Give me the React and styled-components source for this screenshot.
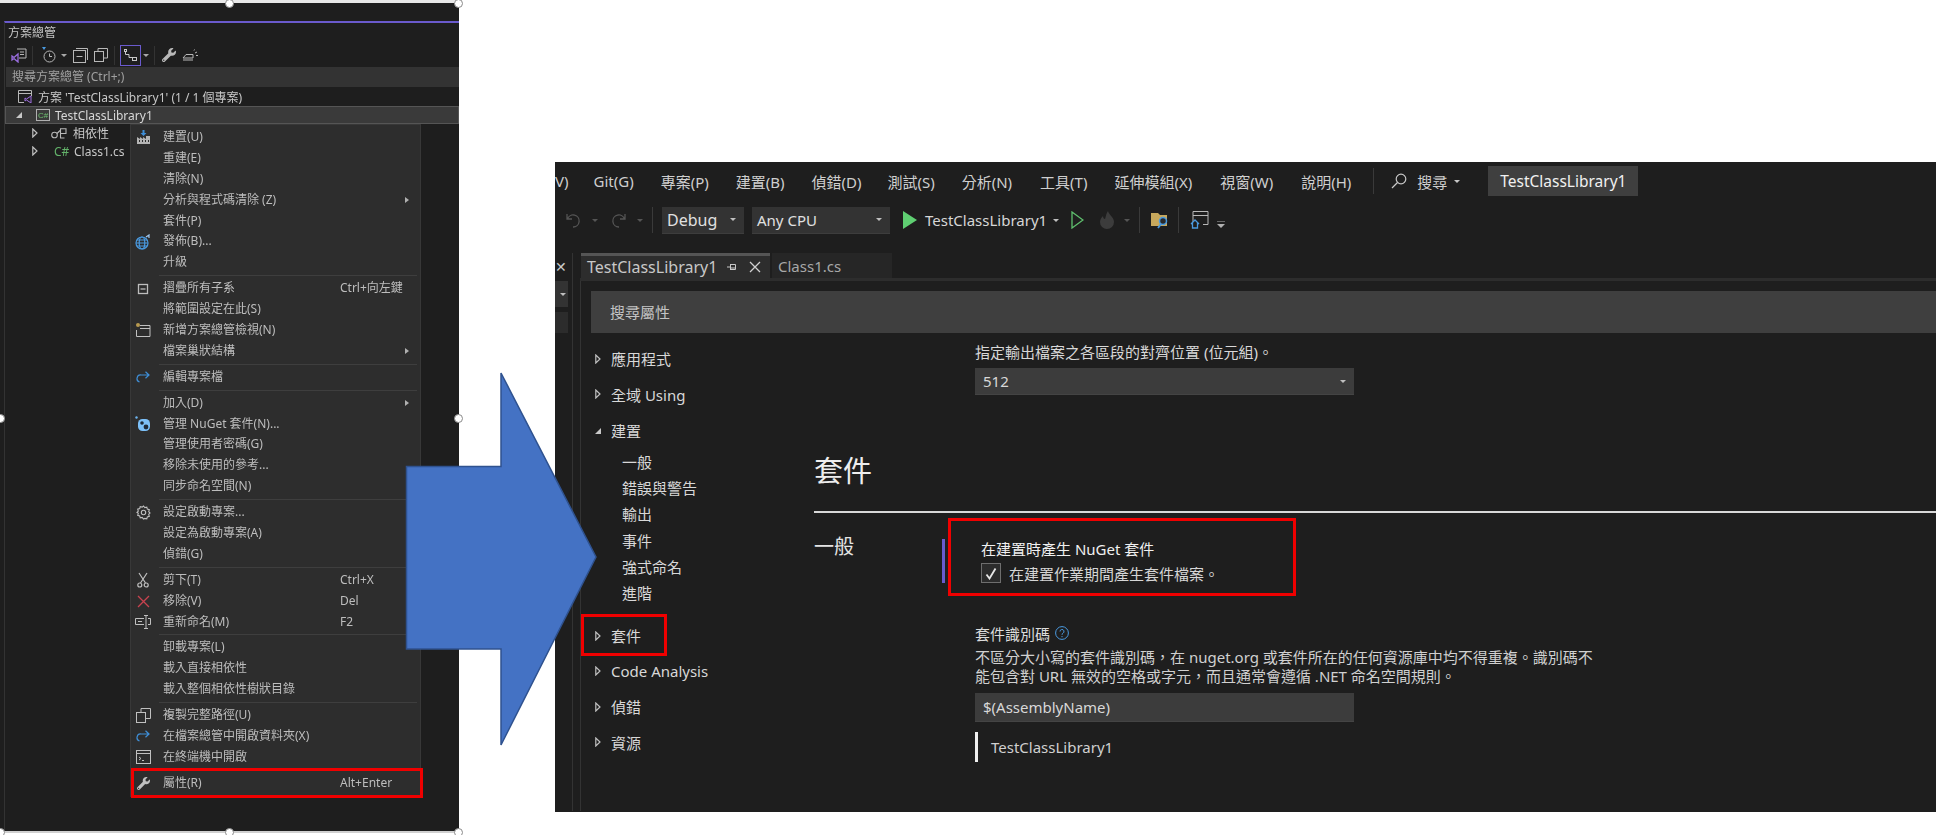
import React from "react";
import styled, { createGlobalStyle } from "styled-components";
import { FaWrench } from "react-icons/fa";

const FONT = '"Noto Sans", "Noto Sans CJK TC", sans-serif';
const SOFT = "filter: blur(0.35px);";

const GlobalStyle = createGlobalStyle`
  html, body { margin: 0; padding: 0; background: #fff; }
  body { font-family: ${FONT}; overflow: hidden; }
  * { box-sizing: border-box; }
`;

const Page = styled.div`
  position: relative;
  width: 1936px;
  height: 835px;
  display: flex;
  align-items: flex-start;
  background: #fff;
  overflow: hidden;
`;

/* ---------- left picture: solution explorer ---------- */

const Explorer = styled.div`
  position: relative;
  width: 459px;
  height: 833px;
  flex: none;
  background: #1e1e1e;
  border-top: 3px solid #e8e8e8;
  border-bottom: 2px solid #d0d0d0;
  padding: 18px 0 0 4px;
  color: #c8c8c8;
  font-size: 12px;
`;

const Handle = styled.span`
  position: absolute;
  z-index: 3;
  left: ${(p) => p.$x}px;
  top: ${(p) => p.$y}px;
  width: 9px;
  height: 9px;
  margin: -4px 0 0 -4px;
  border-radius: 50%;
  background: #fff;
  border: 1px solid #8a8a8a;
`;

const ExplorerInner = styled.div`
  height: 100%;
  border-left: 1px solid #333;
  border-top: 2px solid #6a5acd;
  ${SOFT}
`;

const TitleRow = styled.div`
  display: flex;
  align-items: center;
  height: 17px;
  padding-left: 3px;
  margin-top: 1px;
  gap: 8px;
  line-height: 17px;
  font-size: 12px;
  color: #c4c4c4;
`;

const Grip = styled.div`
  flex: 1;
  height: 5px;
  background-image: radial-gradient(#4a4a4a 0.6px, transparent 0.7px);
  background-size: 2px 2px;
`;

const MiniBar = styled.div`
  display: flex;
  align-items: center;
  height: 24px;
  margin-top: 2px;
  padding-left: 6px;
`;

const MiniItem = styled.span`
  display: flex;
  align-items: center;
  justify-content: center;
  flex: none;
  margin-left: ${(p) => p.$ml || 0}px;
  color: #b8b8b8;
`;

const MiniSep = styled.span`
  flex: none;
  width: 1px;
  height: 19px;
  background: #333;
  margin-left: ${(p) => p.$ml || 0}px;
`;

const ActiveTool = styled.span`
  display: flex;
  align-items: center;
  justify-content: center;
  flex: none;
  width: 21px;
  height: 21px;
  margin-left: ${(p) => p.$ml || 0}px;
  border: 1px solid #6a5acd;
  color: #c8c8c8;
`;

const Caret = styled.span`
  flex: none;
  display: block;
  width: 0;
  height: 0;
  margin-left: ${(p) => p.$ml || 0}px;
  border-left: 3.5px solid transparent;
  border-right: 3.5px solid transparent;
  border-top: 3.5px solid ${(p) => p.$color || "#a8a8a8"};
`;

const TreeSearch = styled.div`
  height: 20px;
  margin: 0 0 0 1px;
  padding-left: 6px;
  background: #333;
  color: #a0a0a0;
  line-height: 20px;
`;

const TreeRow = styled.div`
  display: flex;
  align-items: center;
  height: ${(p) => p.$h || 18}px;
  padding-left: ${(p) => p.$indent}px;
  gap: ${(p) => p.$gap || 5}px;
  white-space: nowrap;
  ${(p) => p.$selected && "background: #3a3a3a; border: 1px solid #555; color: #d8d8d8;"}
`;

const ProjectIcon = styled.svg`
  margin-left: 8px;
`;

const TreeName = styled.span`
  margin-left: ${(p) => p.$ml || 0}px;
`;

const GreenMark = styled.span`
  width: 15px;
  color: #63b36a;
`;

const Menu = styled.div`
  position: absolute;
  z-index: 1;
  left: 130px;
  top: 121px;
  width: 291px;
  padding: 2px 0 2px 0;
  background: #2d2d2d;
  border: 1px solid #383838;
  color: #bdbdbd;
`;

const MenuRow = styled.div`
  position: relative;
  display: flex;
  align-items: center;
  height: 20.9px;
  line-height: 20.9px;
  white-space: nowrap;
`;

const MenuIcon = styled.span`
  display: flex;
  align-items: center;
  justify-content: center;
  flex: none;
  width: 16px;
  height: 16px;
  margin-left: 4px;
  ${SOFT}
`;

const MenuLabel = styled.span`
  margin-left: 12px;
  flex: none;
  width: 177px;
  ${SOFT}
`;

const MenuShortcut = styled.span`
  flex: none;
  ${SOFT}
`;

const SubArrow = styled.span`
  position: absolute;
  right: 11px;
  top: 7px;
  width: 0;
  height: 0;
  border-top: 3.5px solid transparent;
  border-bottom: 3.5px solid transparent;
  border-left: 4px solid #b0b0b0;
`;

const MenuSep = styled.div`
  height: 5px;
  margin-left: 28px;
  margin-right: 3px;
  padding-top: 2px;
  &::after {
    content: "";
    display: block;
    height: 1px;
    background: #3e3e3e;
  }
`;

const RedBox = styled.span`
  position: absolute;
  z-index: 2;
  left: ${(p) => p.$l}px;
  top: ${(p) => p.$t}px;
  width: ${(p) => p.$w}px;
  height: ${(p) => p.$h}px;
  border: 3px solid #f00000;
  pointer-events: none;
`;

/* ---------- right picture: project properties ---------- */

const Studio = styled.div`
  flex: 1;
  height: 650px;
  margin: 162px 0 0 96px;
  background: #1e1e1e;
  color: #d6d6d6;
  overflow: hidden;
  font-size: 15px;
`;

const MenuBar = styled.div`
  display: flex;
  align-items: center;
  height: 38px;
  white-space: nowrap;
  color: #cfcfcf;
`;

const MenuWord = styled.span`
  flex: none;
  margin-left: ${(p) => p.$ml}px;
`;

const BarSep = styled.span`
  flex: none;
  width: 1px;
  height: 26px;
  margin-left: ${(p) => p.$ml}px;
  background: #3a3a3a;
`;

const ProjectChip = styled.span`
  flex: none;
  display: flex;
  align-items: center;
  justify-content: center;
  width: 150px;
  height: 30px;
  margin-left: 28px;
  font-size: 15.5px;
  background: #3f3f3f;
  color: #f0f0f0;
`;

const ToolBar = styled.div`
  display: flex;
  align-items: center;
  height: 36px;
  margin-top: 2px;
  white-space: nowrap;
`;

const ToolItem = styled.span`
  flex: none;
  display: flex;
  align-items: center;
  justify-content: ${(p) => (p.$text ? "flex-start" : "center")};
  margin-left: ${(p) => p.$ml}px;
  ${(p) => p.$w && `width: ${p.$w}px;`}
`;

const Combo = styled.span`
  flex: none;
  display: flex;
  align-items: center;
  justify-content: space-between;
  width: ${(p) => p.$w}px;
  height: 27px;
  margin-left: ${(p) => p.$ml}px;
  padding: 0 8px 0 5px;
  font-size: ${(p) => p.$fs || 15}px;
  background: #333;
  border-bottom: 1px solid #3d3d3d;
  color: #e0e0e0;
`;

const Workspace = styled.div`
  display: flex;
  height: 558px;
  margin-top: 15px;
`;

const SideStub = styled.div`
  flex: none;
  width: 18px;
  border-right: 1px solid #333;
`;

const StubClose = styled.div`
  height: 28px;
  display: flex;
  align-items: center;
  color: #c8c8c8;
  font-size: 14px;
  line-height: 1;
`;

const StubCombo = styled.div`
  width: 13px;
  height: 26px;
  background: #333;
  display: flex;
  align-items: center;
  justify-content: flex-end;
  padding-right: 2px;
`;

const StubPanel = styled.div`
  width: 13px;
  height: 21px;
  margin-top: 5px;
  background: #2c2c2c;
`;

const Main = styled.div`
  flex: 1;
  min-width: 0;
  margin-left: 7px;
  display: flex;
  flex-direction: column;
`;

const TabStrip = styled.div`
  display: flex;
  height: 28px;
  padding-left: 1px;
  border-bottom: 3px solid #2d2d2d;
`;

const Tab = styled.div`
  display: flex;
  align-items: center;
  height: 25px;
  flex: none;
  width: ${(p) => p.$w}px;
  margin-right: ${(p) => (p.$active ? 2 : 0)}px;
  padding-left: 6px;
  background: ${(p) => (p.$active ? "#2d2d2d" : "#262626")};
  border-top: ${(p) => (p.$active ? "3px solid #555" : "0")};
  color: ${(p) => (p.$active ? "#c8c8c8" : "#a8a8a8")};
  white-space: nowrap;
`;

const TabName = styled.span`
  flex: none;
  width: 127px;
  font-size: 16px;
`;

const PinIcon = styled.svg`
  margin-left: 13px;
`;

const CloseIcon = styled.svg`
  margin-left: 12px;
`;

const Body = styled.div`
  flex: 1;
  min-height: 0;
  border-left: 1px solid #333;
  padding: 10px 0 0 10px;
`;

const PropSearch = styled.div`
  height: 42px;
  padding-left: 19px;
  background: #3f3f3f;
  color: #c4c4c4;
  line-height: 42px;
`;

const Columns = styled.div`
  display: flex;
`;

const Nav = styled.div`
  flex: none;
  width: 223px;
  padding-top: 8px;
`;

const NavRow = styled.div`
  position: relative;
  display: flex;
  align-items: center;
  height: 35.5px;
  margin-top: ${(p) => p.$mt || 0}px;
  padding-left: 3px;
  gap: 9px;
  white-space: nowrap;
  color: #d8d8d8;
`;

const NavArrow = styled.span`
  flex: none;
  display: flex;
  justify-content: center;
  width: 8px;
`;

const NavSub = styled.div`
  height: 26.4px;
  line-height: 26.4px;
  padding-left: 31px;
  color: #d8d8d8;
`;

const Content = styled.div`
  flex: 1;
  min-width: 0;
  padding-top: 9px;
`;

const Indented = styled.div`
  margin-left: 161px;
`;

const Line = styled.div`
  height: 20px;
  line-height: 20px;
  white-space: nowrap;
  color: ${(p) => p.$color || "#d8d8d8"};
`;

const Field = styled.div`
  display: flex;
  align-items: center;
  justify-content: space-between;
  width: 379px;
  height: ${(p) => p.$h}px;
  margin-top: ${(p) => p.$mt}px;
  padding: 0 8px;
  background: #3c3c3c;
  border-bottom: 1px solid #444;
  color: #d8d8d8;
`;

const BigTitle = styled.h1`
  margin: 56px 0 0;
  height: 40px;
  line-height: 40px;
  font-size: 29px;
  font-weight: 400;
  color: #eee;
`;

const Rule = styled.div`
  height: 2px;
  margin-top: 20px;
  background: #d8d8d8;
`;

const Section = styled.div`
  display: grid;
  grid-template-columns: 161px 1fr;
`;

const SectionName = styled.div`
  margin-top: 21px;
  height: 26px;
  line-height: 26px;
  font-size: 20px;
  color: #e4e4e4;
`;

const CheckGroup = styled.div`
  position: relative;
  margin-top: 26px;
  padding-left: 6px;
  &::before {
    content: "";
    position: absolute;
    left: -33px;
    top: 0;
    width: 3px;
    height: 44px;
    background: #6a5acd;
  }
`;

const CheckRow = styled.div`
  display: flex;
  align-items: center;
  gap: 8px;
  height: 20px;
  margin-top: 4px;
  white-space: nowrap;
`;

const CheckBox = styled.span`
  flex: none;
  display: flex;
  align-items: center;
  justify-content: center;
  width: 20px;
  height: 20px;
  background: #2c2c2c;
  border: 1px solid #6e6e6e;
`;

const FieldTitle = styled.div`
  display: flex;
  align-items: center;
  gap: 5px;
  height: 20px;
  margin-top: 40px;
  white-space: nowrap;
  color: #dcdcdc;
`;

const Description = styled.div`
  margin-top: 5px;
  line-height: 19px;
  white-space: nowrap;
  color: #d0d0d0;
`;

const ValueNote = styled.div`
  display: flex;
  align-items: center;
  height: 30px;
  margin-top: 10px;
  padding-left: 13px;
  border-left: 3px solid #f0f0f0;
  color: #d0d0d0;
`;

const BigArrow = styled.svg`
  position: absolute;
  z-index: 4;
  left: 400px;
  top: 365px;
`;

const OverflowGlyph = styled.svg`
  margin-top: 10px;
`;

/* ---------- drawings ---------- */

const Svg = ({ w = 16, h = 16, vb = "0 0 16 16", children }) => (
  <svg width={w} height={h} viewBox={vb} fill="none" stroke="currentColor" strokeWidth="1">
    {children}
  </svg>
);

const TreeOpen = () => (
  <svg width="8" height="8" viewBox="0 0 8 8"><path d="M7 1v6H1z" fill="#c8c8c8" /></svg>
);

const TreeClosed = () => (
  <svg width="6" height="10" viewBox="0 0 6 10" fill="none" stroke="#c0c0c0" strokeWidth="1.2"><path d="M.8 1v8L5 5z" /></svg>
);

const BlueArrow = () => (
  <svg width="14" height="12" viewBox="0 0 14 12" fill="none" stroke="#3f8fd8" strokeWidth="1.2">
    <path d="M13 4H5a3.6 3.6 0 0 0-1.5 7M9.500.8 13 4 9.500 7.200" />
  </svg>
);

const icons = {
  build: (
    <svg width="15" height="15" viewBox="0 0 15 15">
      <path d="M1 14V7l3 2V7l3 2V7l3 2V6h4v8z" fill="#b4b4b4" />
      <path d="M6.500 0h2v3h2L7.500 6 4.500 3h2z" fill="#3f8fd8" />
      <path d="M3 11h1M6 11h1M9 11h1M12 11h1" stroke="#2d2d2d" strokeWidth="2" />
    </svg>
  ),
  globe: (
    <svg width="16" height="16" viewBox="0 0 16 16" fill="none" stroke="#4a9ae0" strokeWidth="1.2">
      <circle cx="7" cy="9" r="6" />
      <ellipse cx="7" cy="9" rx="2.800" ry="6" />
      <path d="M1 9h12M2 6h10M2 12h10" />
      <path d="M11 3l3-2v3" stroke="#a0c8f0" />
    </svg>
  ),
  collapse: (
    <Svg w="12" h="12" vb="0 0 12 12"><rect x="1.500" y="1.500" width="9" height="9" strokeWidth="1.300" /><path d="M3.500 6h5" strokeWidth="1.300" /></Svg>
  ),
  newView: (
    <svg width="16" height="16" viewBox="0 0 16 16" fill="none" stroke="#c0c0c0">
      <path d="M5 3.500h10v11H1.500V8M5 6.500h10" />
      <circle cx="3" cy="3" r="2" fill="#b89a50" stroke="none" />
    </svg>
  ),
  edit: <BlueArrow />,
  nuget: (
    <svg width="16" height="16" viewBox="0 0 16 16">
      <circle cx="1.500" cy="1.500" r="1.200" fill="#6db4f0" />
      <rect x="3" y="3" width="12" height="12" rx="4.500" fill="#7cc0f8" />
      <circle cx="7" cy="7" r="1.800" fill="#1e2a38" />
      <circle cx="11" cy="11" r="2.400" fill="#1e2a38" />
    </svg>
  ),
  gear: (
    <svg width="15" height="15" viewBox="0 0 15 15" fill="none" stroke="#c0c0c0" strokeWidth="1.100">
      <circle cx="7.500" cy="7.500" r="2.200" />
      <path d="M7.500 1l1.300 1.600 2-.5.5 2 2 .6-.6 2 1.300 1.300-1.300 1.300.6 2-2 .6-.5 2-2-.5L7.500 14l-1.300-1.600-2 .5-.5-2-2-.6.6-2L1 7.500l1.300-1.300-.6-2 2-.6.5-2 2 .5z" />
    </svg>
  ),
  cut: (
    <svg width="12" height="16" viewBox="0 0 12 16" fill="none" stroke="#c0c0c0" strokeWidth="1.200">
      <path d="M2 1l6.500 10M10 1L3.500 11" />
      <circle cx="2.800" cy="13" r="2" />
      <circle cx="9.200" cy="13" r="2" />
    </svg>
  ),
  remove: (
    <svg width="13" height="13" viewBox="0 0 13 13" fill="none" stroke="#c8424f" strokeWidth="1.300"><path d="M1 1l11 11M12 1L1 12" /></svg>
  ),
  rename: (
    <svg width="16" height="14" viewBox="0 0 16 14" fill="none" stroke="#c0c0c0">
      <path d="M9 3.500H.500v6H9M13 3.500h2.500v6H13M11 1v12M9 .500h4M9 13.500h4" />
      <path d="M3 6.500h4" />
    </svg>
  ),
  copy: (
    <svg width="15" height="15" viewBox="0 0 15 15" fill="none" stroke="#c0c0c0">
      <rect x=".500" y="4.500" width="9" height="10" />
      <path d="M5 4V.500h9.500v10H10" />
    </svg>
  ),
  folder: <BlueArrow />,
  terminal: (
    <svg width="15" height="14" viewBox="0 0 15 14" fill="none" stroke="#c0c0c0">
      <rect x=".500" y=".500" width="14" height="13" />
      <path d="M.500 3.500h14M3 7l2 1.500L3 10M6 10.500h2" />
    </svg>
  ),
  wrench: <FaWrench size={13} color="#c0c0c0" />,
};

const menuGroups = [
  [
    { label: "建置(U)", icon: "build" },
    { label: "重建(E)" },
    { label: "清除(N)" },
    { label: "分析與程式碼清除 (Z)", sub: true },
    { label: "套件(P)" },
    { label: "發佈(B)...", icon: "globe" },
    { label: "升級" },
  ],
  [
    { label: "摺疊所有子系", icon: "collapse", key: "Ctrl+向左鍵" },
    { label: "將範圍設定在此(S)" },
    { label: "新增方案總管檢視(N)", icon: "newView" },
    { label: "檔案巢狀結構", sub: true },
  ],
  [{ label: "編輯專案檔", icon: "edit" }],
  [
    { label: "加入(D)", sub: true },
    { label: "管理 NuGet 套件(N)...", icon: "nuget" },
    { label: "管理使用者密碼(G)" },
    { label: "移除未使用的參考..." },
    { label: "同步命名空間(N)" },
  ],
  [
    { label: "設定啟動專案...", icon: "gear" },
    { label: "設定為啟動專案(A)" },
    { label: "偵錯(G)" },
  ],
  [
    { label: "剪下(T)", icon: "cut", key: "Ctrl+X" },
    { label: "移除(V)", icon: "remove", key: "Del" },
    { label: "重新命名(M)", icon: "rename", key: "F2" },
  ],
  [
    { label: "卸載專案(L)" },
    { label: "載入直接相依性" },
    { label: "載入整個相依性樹狀目錄" },
  ],
  [
    { label: "複製完整路徑(U)", icon: "copy" },
    { label: "在檔案總管中開啟資料夾(X)", icon: "folder" },
    { label: "在終端機中開啟", icon: "terminal" },
  ],
  [{ label: "屬性(R)", icon: "wrench", key: "Alt+Enter", marked: true }],
];

const menuWords = [
  ["Git(G)", 25], ["專案(P)", 27], ["建置(B)", 27], ["偵錯(D)", 27], ["測試(S)", 26],
  ["分析(N)", 27], ["工具(T)", 28], ["延伸模組(X)", 27], ["視窗(W)", 28], ["說明(H)", 28],
];

const handles = [[229, 3], [458, 3], [0, 418], [458, 418], [0, 832], [229, 832], [458, 832]];

const ContextMenu = () => (
  <Menu>
    {menuGroups.map((group, g) => (
      <React.Fragment key={g}>
        {g > 0 && <MenuSep />}
        {group.map((item) => (
          <MenuRow key={item.label}>
            <MenuIcon>{item.icon && icons[item.icon]}</MenuIcon>
            <MenuLabel>{item.label}</MenuLabel>
            {item.key && <MenuShortcut>{item.key}</MenuShortcut>}
            {item.sub && <SubArrow />}
            {item.marked && <RedBox $l={0} $t={-5} $w={292} $h={30} />}
          </MenuRow>
        ))}
      </React.Fragment>
    ))}
  </Menu>
);

const SolutionExplorer = () => (
  <Explorer>
    {handles.map(([x, y]) => (
      <Handle key={`${x}-${y}`} $x={x} $y={y - 3} />
    ))}
    <ExplorerInner>
      <TitleRow>
        方案總管
        <Grip />
      </TitleRow>
      <MiniBar>
        <MiniItem>
          <svg width="16" height="16" viewBox="0 0 16 16" fill="none">
            <path d="M6 2h9v9H8" stroke="#b8b8b8" />
            <path d="M9 5h4M9 7.500h4" stroke="#b8b8b8" />
            <path d="M1 9l2 1.500L7 7v8l-4-3.500L1 13z" stroke="#9a6ee0" strokeWidth="1.300" />
          </svg>
        </MiniItem>
        <MiniSep $ml={5} />
        <MiniItem $ml={8}>
          <svg width="15" height="16" viewBox="0 0 15 16" fill="none" stroke="#b8b8b8">
            <circle cx="8.500" cy="9.500" r="5.500" />
            <path d="M8.500 6.500v3h2.500" />
            <path d="M1 0h4L3 3z" fill="#4a9ae0" stroke="none" />
          </svg>
        </MiniItem>
        <Caret $ml={5} />
        <MiniItem $ml={6}>
          <svg width="15" height="15" viewBox="0 0 15 15" fill="none" stroke="#b8b8b8">
            <rect x=".500" y="2.500" width="12" height="12" />
            <path d="M3 .500h11.500V12M3.500 8.500h6" />
          </svg>
        </MiniItem>
        <MiniItem $ml={6}>
          <svg width="14" height="14" viewBox="0 0 14 14" fill="none" stroke="#b8b8b8">
            <rect x=".500" y="3.500" width="9" height="10" />
            <path d="M4 3V.500h9.500V10H10" />
          </svg>
        </MiniItem>
        <MiniSep $ml={6} />
        <ActiveTool $ml={5}>
          <svg width="15" height="15" viewBox="0 0 15 15" fill="none" stroke="#c8c8c8">
            <rect x="1.500" y="1.500" width="2" height="2" />
            <rect x="9.500" y="9.500" width="4" height="3" />
            <path d="M2.500 4v2.500H6v3h3.500" />
          </svg>
        </ActiveTool>
        <Caret $ml={2} />
        <MiniSep $ml={5} />
        <MiniItem $ml={7}>
          <FaWrench size={14} color="#b8b8b8" />
        </MiniItem>
        <MiniItem $ml={6}>
          <svg width="16" height="12" viewBox="0 0 16 12" fill="none" stroke="#b8b8b8">
            <path d="M1 9h10V5.500H4L1 9zM1 11h10M13 4l2-1M12 1.500l.5-1M14 6.500h2" />
          </svg>
        </MiniItem>
      </MiniBar>
      <TreeSearch>搜尋方案總管 (Ctrl+;)</TreeSearch>
      <TreeRow $indent={13} $h={19} $gap={5}>
        <svg width="15" height="13" viewBox="0 0 15 13" fill="none">
          <path d="M.500 12.500V.500h13V6M.500 3.500h13M.500 12.500H6" stroke="#b8b8b8" />
          <path d="M7 8l1.500 1L13 6v7l-4.500-3L7 11z" stroke="#a070e0" />
        </svg>
        方案 'TestClassLibrary1' (1 / 1 個專案)
      </TreeRow>
      <TreeRow $indent={9} $h={18} $gap={5} $selected>
        <TreeOpen />
        <ProjectIcon width="14" height="12" viewBox="0 0 14 12">
          <rect x=".500" y=".500" width="13" height="11" fill="none" stroke="#b0b0b0" />
          <text x="2" y="9" fontSize="8" fill="#6ec070" fontFamily="Liberation Sans">C#</text>
        </ProjectIcon>
        TestClassLibrary1
      </TreeRow>
      <TreeRow $indent={27} $h={18} $gap={13}>
        <TreeClosed />
        <svg width="16" height="11" viewBox="0 0 16 11" fill="none" stroke="#b8b8b8" strokeWidth="1.100">
          <circle cx="3.500" cy="7" r="2.800" />
          <path d="M6 5.500l3-3M9.500 .800h5.500v4.700H9.500zM9.500 5.500v4.500h4" />
        </svg>
        <TreeName $ml={-7}>相依性</TreeName>
      </TreeRow>
      <TreeRow $indent={27} $h={18} $gap={16}>
        <TreeClosed />
        <GreenMark>C#</GreenMark>
        <TreeName $ml={-11}>Class1.cs</TreeName>
      </TreeRow>
    </ExplorerInner>
    <ContextMenu />
  </Explorer>
);

const TitleBar = () => (
  <MenuBar>
    <MenuWord $ml={0}>V)</MenuWord>
    {menuWords.map(([word, ml]) => (
      <MenuWord key={word} $ml={ml}>{word}</MenuWord>
    ))}
    <BarSep $ml={22} />
    <ToolItem $ml={17}>
      <svg width="16" height="16" viewBox="0 0 16 16" fill="none" stroke="#c8c8c8" strokeWidth="1.200">
        <circle cx="10" cy="6" r="4.800" />
        <path d="M6.500 9.500L1 15" />
      </svg>
    </ToolItem>
    <MenuWord $ml={10}>搜尋</MenuWord>
    <Caret $ml={7} $color="#c8c8c8" />
    <ProjectChip>TestClassLibrary1</ProjectChip>
  </MenuBar>
);

const Commands = () => (
  <ToolBar>
    <ToolItem $ml={11} $w={16}>
      <svg width="16" height="16" viewBox="0 0 16 16" fill="none" stroke="#555" strokeWidth="1.300">
        <path d="M1 2v5h5M1.500 7A6 6 0 1 1 7 15" />
      </svg>
    </ToolItem>
    <Caret $ml={10} $color="#555" />
    <ToolItem $ml={13} $w={15}>
      <svg width="15" height="16" viewBox="0 0 15 16" fill="none" stroke="#555" strokeWidth="1.300">
        <path d="M14 2v5H9M13.500 7A6 6 0 1 0 8 15" />
      </svg>
    </ToolItem>
    <Caret $ml={11} $color="#555" />
    <BarSep $ml={9} />
    <Combo $ml={9} $w={82} $fs={16}>
      Debug <Caret $color="#c0c0c0" />
    </Combo>
    <Combo $ml={8} $w={138}>
      Any CPU <Caret $color="#c0c0c0" />
    </Combo>
    <ToolItem $ml={13} $w={14}>
      <svg width="14" height="18" viewBox="0 0 14 18"><path d="M0 0l14 9-14 9z" fill="#5fcf72" /></svg>
    </ToolItem>
    <ToolItem $ml={8} $w={119} $text>TestClassLibrary1</ToolItem>
    <Caret $ml={9} $color="#c0c0c0" />
    <ToolItem $ml={12} $w={13}>
      <svg width="13" height="18" viewBox="0 0 13 18" fill="none" stroke="#5fbf6e" strokeWidth="1.300"><path d="M1 1l11 8-11 8z" /></svg>
    </ToolItem>
    <ToolItem $ml={15} $w={16}>
      <svg width="16" height="18" viewBox="0 0 16 18"><path d="M9 0c1 4 6 6 6 11a7 7 0 0 1-14 0c0-3 2-5 3-6 0 2 1 3 2 3 1-3 1-5 3-8z" fill="#3c3c3c" /></svg>
    </ToolItem>
    <Caret $ml={9} $color="#555" />
    <BarSep $ml={9} />
    <ToolItem $ml={11} $w={18}>
      <svg width="18" height="18" viewBox="0 0 18 18">
        <path d="M0 2h7l2 2h7v11H0z" fill="#c7a85c" />
        <circle cx="12" cy="10" r="3.500" fill="#2a2a2a" stroke="#4a9ae0" strokeWidth="1.500" />
        <path d="M10 13l-3 4" stroke="#4a9ae0" strokeWidth="1.800" />
      </svg>
    </ToolItem>
    <BarSep $ml={9} />
    <ToolItem $ml={11} $w={19}>
      <svg width="19" height="20" viewBox="0 0 19 20" fill="none" stroke="#b8b8b8">
        <path d="M3 12V1.500h15v13h-5M3 5.500h15" />
        <path d="M1 14l4-4 4 4M2.500 13v5h5v-5" stroke="#4a9ae0" strokeWidth="1.300" />
      </svg>
    </ToolItem>
    <ToolItem $ml={8} $w={8}>
      <OverflowGlyph width="8" height="8" viewBox="0 0 8 8"><path d="M0 0h8" stroke="#b0b0b0" /><path d="M0 3h8L4 7z" fill="#b0b0b0" /></OverflowGlyph>
    </ToolItem>
  </ToolBar>
);

const NavItem = ({ label, open, mt, children }) => (
  <NavRow $mt={mt}>
    <NavArrow>{open ? <TreeOpen /> : <TreeClosed />}</NavArrow>
    {label}
    {children}
  </NavRow>
);

const PropertiesNav = () => (
  <Nav>
    <NavItem label="應用程式" />
    <NavItem label="全域 Using" />
    <NavItem label="建置" open mt={1} />
    {["一般", "錯誤與警告", "輸出", "事件", "強式命名", "進階"].map((name) => (
      <NavSub key={name}>{name}</NavSub>
    ))}
    <NavItem label="套件" mt={11}>
      <RedBox $l={-10} $t={-4} $w={86} $h={42} />
    </NavItem>
    <NavItem label="Code Analysis" />
    <NavItem label="偵錯" />
    <NavItem label="資源" />
  </Nav>
);

const PropertiesContent = () => (
  <Content>
    <Indented>
      <Line>指定輸出檔案之各區段的對齊位置 (位元組)。</Line>
      <Field $h={27} $mt={6}>
        512 <Caret $color="#c0c0c0" />
      </Field>
    </Indented>
    <BigTitle>套件</BigTitle>
    <Rule />
    <Section>
      <SectionName>一般</SectionName>
      <div>
        <CheckGroup>
          <RedBox $l={-27} $t={-21} $w={348} $h={78} />
          <Line $color="#f0f0f0">在建置時產生 NuGet 套件</Line>
          <CheckRow>
            <CheckBox>
              <svg width="12" height="13" viewBox="0 0 12 13" fill="none" stroke="#e8e8e8" strokeWidth="1.800"><path d="M1.500 7.500L4.500 11.500 10.500 1.500" /></svg>
            </CheckBox>
            在建置作業期間產生套件檔案。
          </CheckRow>
        </CheckGroup>
        <FieldTitle>
          套件識別碼
          <svg width="14" height="14" viewBox="0 0 14 14" fill="none" stroke="#4a9ae0">
            <circle cx="7" cy="7" r="6.400" />
            <path d="M5 5.500a2 2 0 1 1 3 1.700c-.7.400-1 .8-1 1.600M7 10v1.200" />
          </svg>
        </FieldTitle>
        <Description>
          不區分大小寫的套件識別碼，在 nuget.org 或套件所在的任何資源庫中均不得重複。識別碼不
          <br />
          能包含對 URL 無效的空格或字元，而且通常會遵循 .NET 命名空間規則。
        </Description>
        <Field $h={29} $mt={7}>$(AssemblyName)</Field>
        <ValueNote>TestClassLibrary1</ValueNote>
      </div>
    </Section>
  </Content>
);

const PropertiesWindow = () => (
  <Studio>
    <TitleBar />
    <Commands />
    <Workspace>
      <SideStub>
        <StubClose>✕</StubClose>
        <StubCombo><Caret $color="#c0c0c0" /></StubCombo>
        <StubPanel />
      </SideStub>
      <Main>
        <TabStrip>
          <Tab $active $w={189}>
            <TabName>TestClassLibrary1</TabName>
            <PinIcon width="10" height="8" viewBox="0 0 10 8" fill="none" stroke="#c8c8c8"><path d="M0 4h3M3.500 1v6M3.500 1.500h5v5h-5M3.500 5h5" /></PinIcon>
            <CloseIcon width="12" height="12" viewBox="0 0 12 12" fill="none" stroke="#d0d0d0" strokeWidth="1.300"><path d="M1 1l10 10M11 1L1 11" /></CloseIcon>
          </Tab>
          <Tab $w={120}>Class1.cs</Tab>
        </TabStrip>
        <Body>
          <PropSearch>搜尋屬性</PropSearch>
          <Columns>
            <PropertiesNav />
            <PropertiesContent />
          </Columns>
        </Body>
      </Main>
    </Workspace>
  </Studio>
);

export default function App() {
  return (
    <Page>
      <GlobalStyle />
      <SolutionExplorer />
      <PropertiesWindow />
      <BigArrow width="200" height="385" viewBox="400 365 200 385">
        <path d="M406.500 466.500H501V373L596 557 501 745V649H406.500z" fill="#4472c4" stroke="#2f528f" strokeWidth="1.500" />
      </BigArrow>
    </Page>
  );
}
